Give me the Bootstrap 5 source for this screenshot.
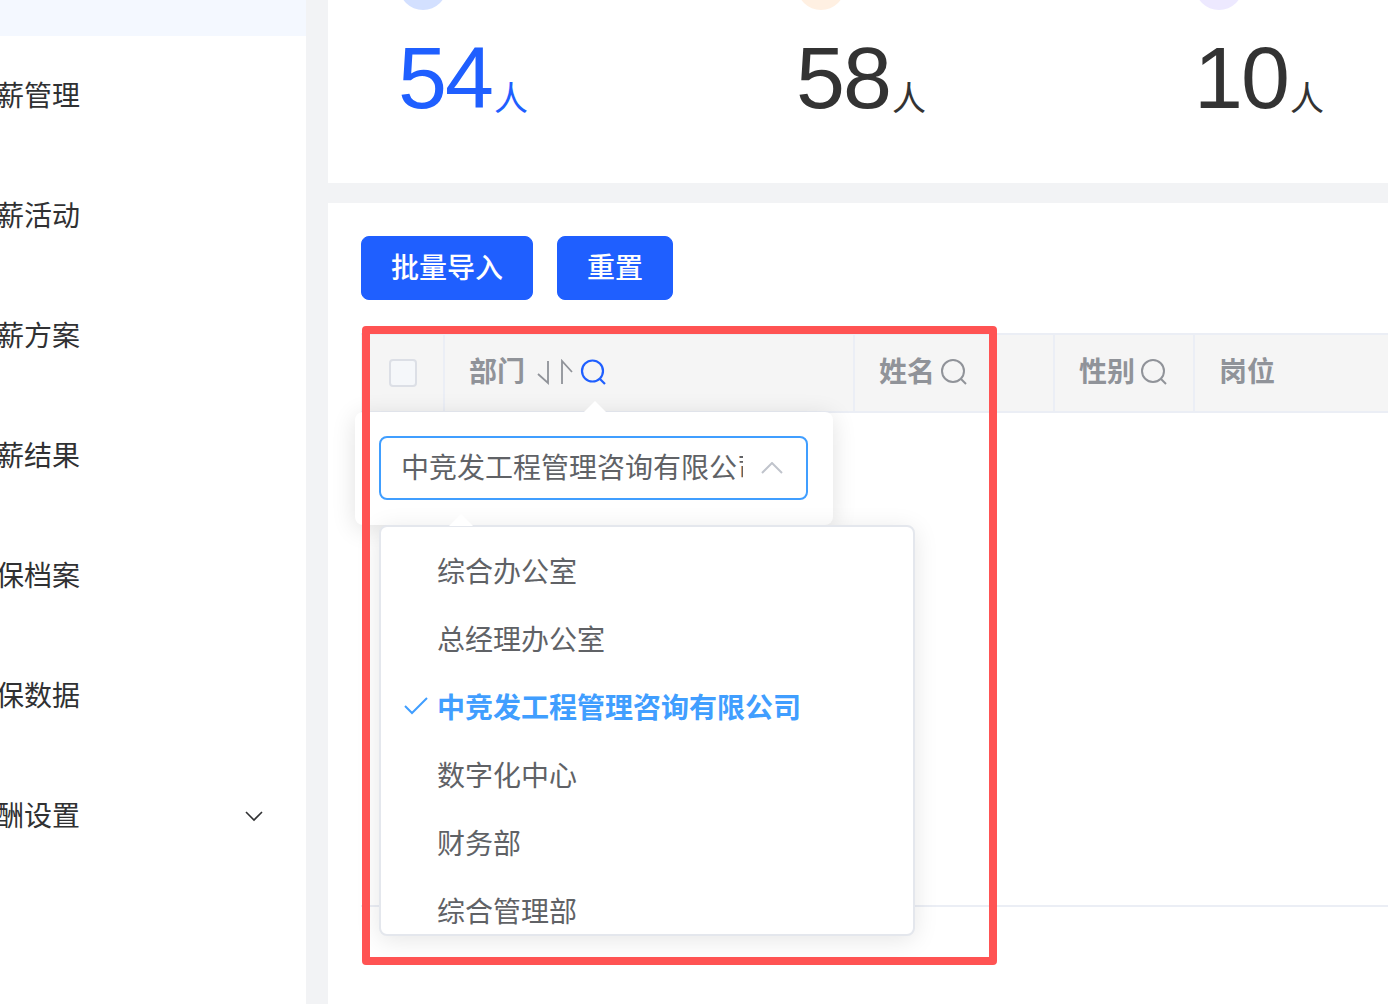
<!DOCTYPE html>
<html lang="zh-CN">
<head>
<meta charset="utf-8">
<title>薪酬</title>
<link href="https://cdn.jsdelivr.net/npm/bootstrap@5.3.0/dist/css/bootstrap.min.css" rel="stylesheet">
<style>
html,body{height:1004px;overflow:hidden;}
body{background:#f2f3f5;font-family:"Liberation Sans","Noto Sans CJK SC",sans-serif;position:relative;}
.shell{height:1004px;}
.side{width:306px;flex:none;background:#fff;}
.side-active{height:36px;background:#f4f8ff;}
.side-row{height:120px;font-size:28px;color:#303133;padding-right:42px;padding-top:2px;}
.side-row span{margin-left:-32px;}
.main-area{margin-left:22px;flex:1 1 auto;min-width:0;}
.stats{height:183px;background:#fff;overflow:hidden;margin-bottom:20px;position:relative;}
.stat-wrap{padding-left:70px;}
.stat{width:398px;flex:none;}
.stat-top{height:10px;position:relative;overflow:hidden;margin-left:1px;}
.dot{display:block;width:48px;height:48px;border-radius:50%;margin-top:-38px;}
.dot-a{background:#d3e0ff;}
.dot-b{background:#fff0e2;}
.dot-c{background:#ede9ff;}
.stat-num{font-size:88px;line-height:96px;margin-top:20px;color:#333;letter-spacing:-2px;white-space:nowrap;}
.stat-num small{font-size:34px;line-height:1;letter-spacing:0;margin-left:2px;vertical-align:-3px;font-family:"Noto Sans CJK SC",sans-serif;}
.stat-blue{color:#1f5fff;}
.panel{background:#fff;height:801px;padding:33px 0 0 33px;}
.act{background:#1f5fff;border-color:#1f5fff;color:#fff;font-size:28px;height:64px;line-height:40px;padding:11px 29px 9px;border-radius:8px;font-weight:500;}
.act:hover{background:#1f5fff;color:#fff;}
.gridtbl{margin-top:33px;height:574px;border-bottom:2px solid #ebeef5;}
.thead-row{height:80px;background:#f5f5f5;border-top:2px solid #ebeef5;border-bottom:2px solid #ebeef5;font-size:28px;font-weight:700;color:#909399;}
.th{height:100%;border-right:2px solid #ebeef5;flex:none;padding-left:24px;}
.th-check{width:84px;padding-left:28px;}
.th-dept{width:410px;}
.th-name{width:200px;}
.th-sex{width:140px;}
.th-post{flex:1 1 auto;border-right:0;}
.fake-check{width:28px;height:28px;border:2px solid #dcdfe6;border-radius:4px;background:#f5f7fa;display:block;}
.ic{display:block;flex:none;}
.ic-sort{margin-left:11px;}
.ic-find{margin-left:5px;}
.ic-blue{margin-left:6px;}
.pop{position:absolute;background:#fff;border-radius:8px;}
.pop-input{left:355px;top:412px;width:478px;height:113px;box-shadow:0 4px 24px rgba(0,0,0,.12);padding:24px 25px 24px 24px;z-index:2;}
.pop-arrow{position:absolute;width:0;height:0;border-left:12px solid transparent;border-right:12px solid transparent;border-bottom:12px solid #fff;}
.pop-input .pop-arrow{left:228px;top:-11px;}
.sel-box{height:64px;border:2px solid #409eff;border-radius:8px;padding:0 23px 0 20px;font-size:28px;color:#606266;background:#fff;}
.sel-text{width:342px;overflow:hidden;white-space:nowrap;font-family:"Noto Sans CJK SC",sans-serif;padding-bottom:4px;}
.pop-menu{left:379px;top:525px;width:536px;height:411px;border:2px solid #e4e7ed;box-shadow:0 4px 24px rgba(0,0,0,.1);z-index:3;}
.pop-menu .pop-arrow{left:68px;top:-13px;}
.menu-clip{height:407px;overflow:hidden;padding-top:9px;border-radius:6px;}
.opt{height:68px;font-size:28px;color:#606266;padding-left:56px;position:relative;font-family:"Noto Sans CJK SC",sans-serif;white-space:nowrap;}
.opt-on{color:#409eff;font-weight:700;}
.opt-on svg{position:absolute;left:23px;top:25px;}
.redframe{position:absolute;left:362px;top:326px;width:635px;height:639px;border:8px solid #ff5353;border-radius:4px;z-index:4;pointer-events:none;}
</style>
</head>
<body>
<div class="shell d-flex">
  <aside class="side">
    <div class="side-active"></div>
    <div class="side-row d-flex align-items-center"><span>调薪管理</span></div>
    <div class="side-row d-flex align-items-center"><span>调薪活动</span></div>
    <div class="side-row d-flex align-items-center"><span>调薪方案</span></div>
    <div class="side-row d-flex align-items-center"><span>调薪结果</span></div>
    <div class="side-row d-flex align-items-center"><span>社保档案</span></div>
    <div class="side-row d-flex align-items-center"><span>社保数据</span></div>
    <div class="side-row d-flex align-items-center justify-content-between"><span>薪酬设置</span>
      <svg class="ic" width="20" height="14" viewBox="0 0 20 14" fill="none" stroke="#303133" stroke-width="1.6"><path d="M2 2l8 8 8-8"/></svg>
    </div>
  </aside>
  <main class="main-area">
    <section class="stats">
      <div class="stat-wrap d-flex">
        <div class="stat"><div class="stat-top"><span class="dot dot-a"></span></div><div class="stat-num stat-blue">54<small>人</small></div></div>
        <div class="stat"><div class="stat-top"><span class="dot dot-b"></span></div><div class="stat-num">58<small>人</small></div></div>
        <div class="stat"><div class="stat-top"><span class="dot dot-c"></span></div><div class="stat-num">10<small>人</small></div></div>
      </div>
    </section>
    <section class="panel">
      <div class="d-flex gap-4">
        <button type="button" class="btn act">批量导入</button>
        <button type="button" class="btn act">重置</button>
      </div>
      <div class="gridtbl">
        <div class="thead-row d-flex align-items-center">
          <div class="th th-check d-flex align-items-center"><span class="fake-check"></span></div>
          <div class="th th-dept d-flex align-items-center"><span>部门</span>
            <svg class="ic ic-sort" width="38" height="28" viewBox="0 0 38 28" fill="none" stroke="#909399" stroke-width="1.8"><path d="M12 2v22L2 15"/><path d="M26 25V2l10 11"/></svg>
            <svg class="ic ic-blue" width="28" height="28" viewBox="0 0 28 28" fill="none" stroke="#1f5fff" stroke-width="2.2"><circle cx="12.5" cy="12" r="10.5"/><path d="M20 20l5 5"/></svg>
          </div>
          <div class="th th-name d-flex align-items-center"><span>姓名</span>
            <svg class="ic ic-find" width="28" height="28" viewBox="0 0 28 28" fill="none" stroke="#909399" stroke-width="2"><circle cx="13" cy="12" r="11"/><path d="M21 20l5 5"/></svg>
          </div>
          <div class="th th-sex d-flex align-items-center"><span>性别</span>
            <svg class="ic ic-find" width="28" height="28" viewBox="0 0 28 28" fill="none" stroke="#909399" stroke-width="2"><circle cx="13" cy="12" r="11"/><path d="M21 20l5 5"/></svg>
          </div>
          <div class="th th-post d-flex align-items-center"><span>岗位</span></div>
        </div>
      </div>
    </section>
  </main>
</div>

<div class="pop pop-input">
  <span class="pop-arrow"></span>
  <div class="sel-box d-flex align-items-center justify-content-between">
    <span class="sel-text">中竞发工程管理咨询有限公司</span>
    <svg class="ic" width="22" height="12" viewBox="0 0 22 12" fill="none" stroke="#c0c4cc" stroke-width="2"><path d="M1 11L11 1l10 10"/></svg>
  </div>
</div>
<div class="pop pop-menu">
  <span class="pop-arrow"></span>
  <div class="menu-clip">
    <div class="opt d-flex align-items-center">综合办公室</div>
    <div class="opt d-flex align-items-center">总经理办公室</div>
    <div class="opt opt-on d-flex align-items-center">
      <svg width="24" height="18" viewBox="0 0 24 18" fill="none" stroke="#409eff" stroke-width="2"><path d="M1 9l7 7L23 1"/></svg>中竞发工程管理咨询有限公司</div>
    <div class="opt d-flex align-items-center">数字化中心</div>
    <div class="opt d-flex align-items-center">财务部</div>
    <div class="opt d-flex align-items-center">综合管理部</div>
  </div>
</div>
<div class="redframe"></div>
<script src="https://cdn.jsdelivr.net/npm/bootstrap@5.3.0/dist/js/bootstrap.bundle.min.js"></script>
</body>
</html>
